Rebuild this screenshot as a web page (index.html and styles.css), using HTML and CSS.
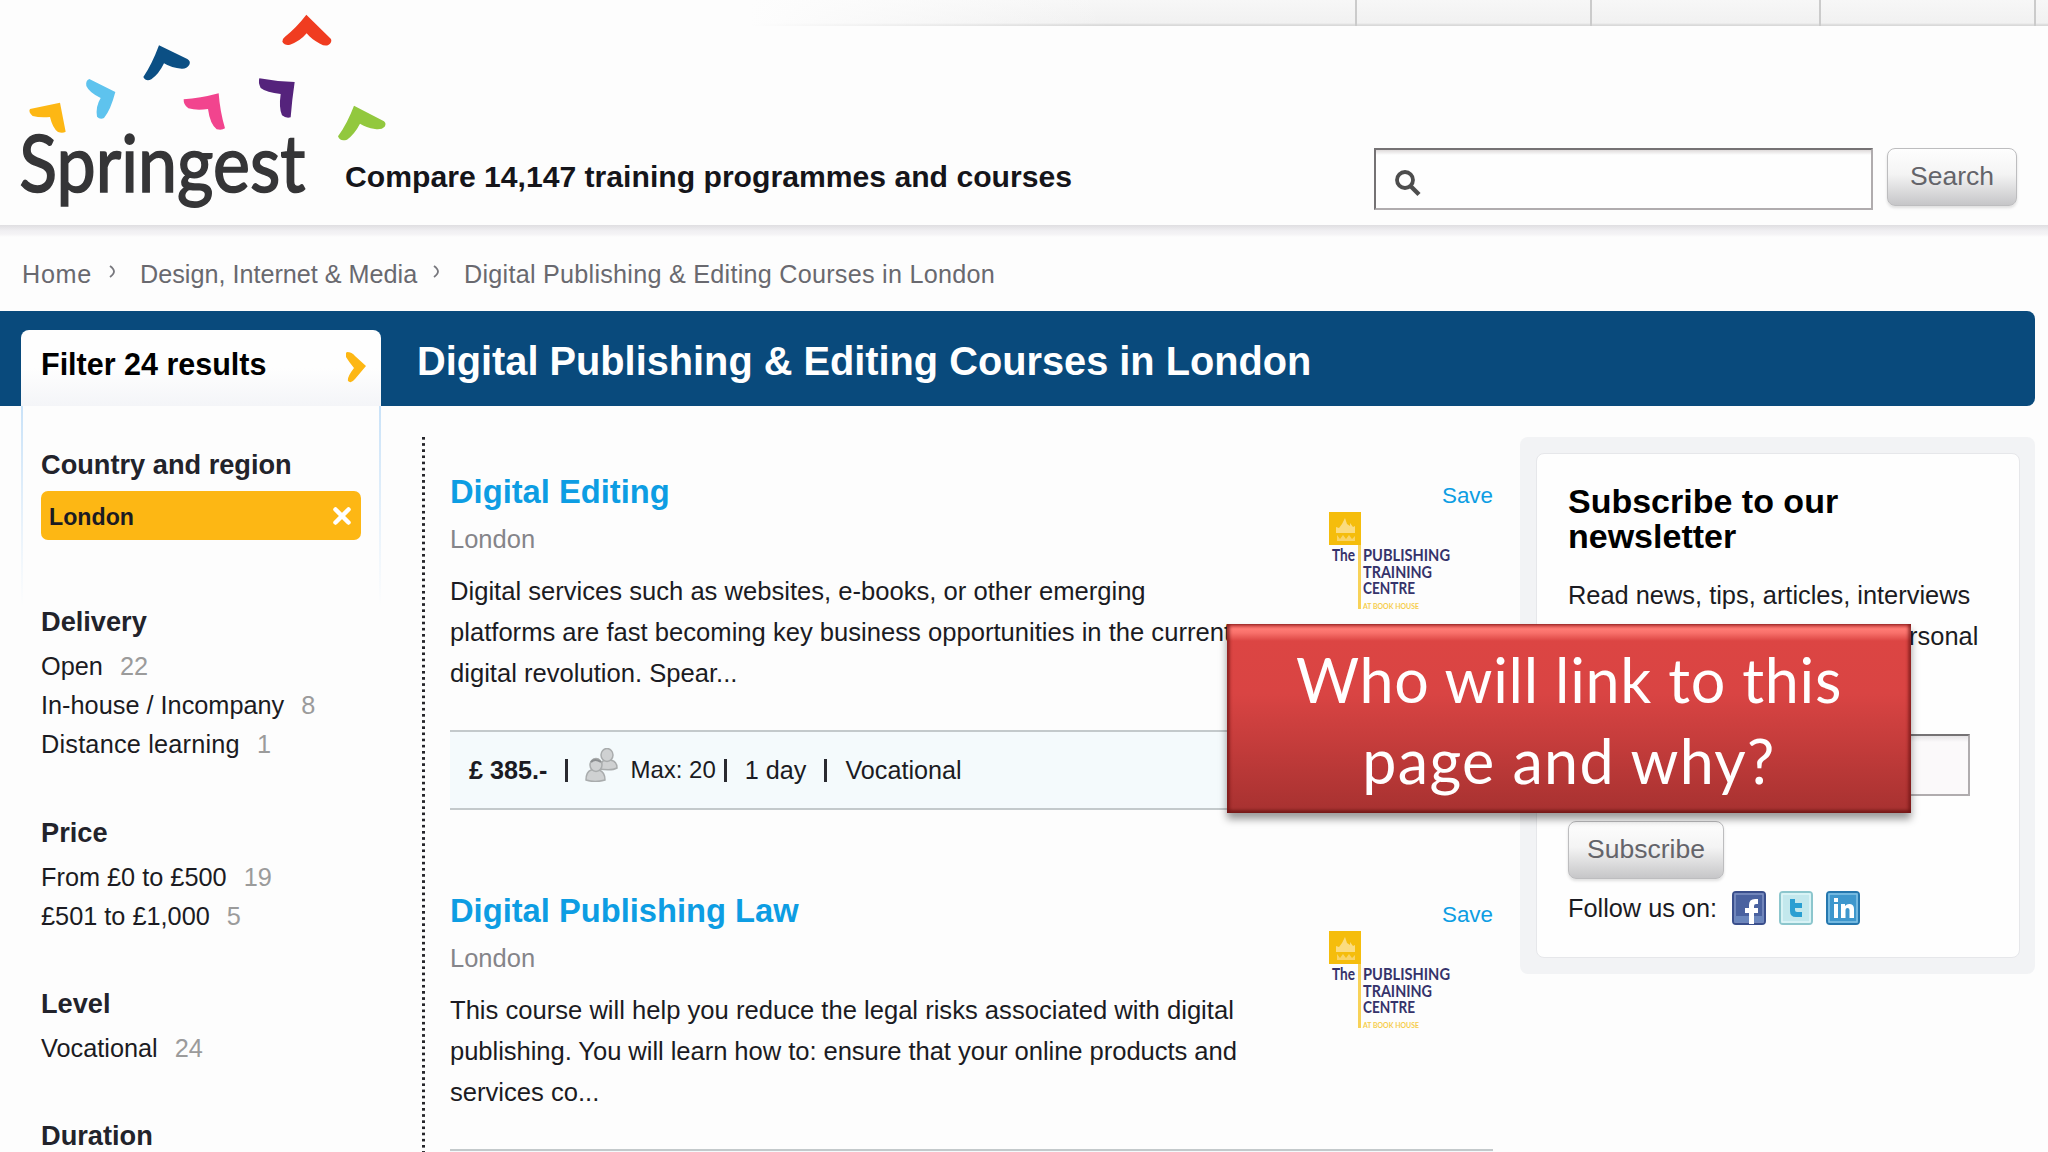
FILE: index.html
```
<!DOCTYPE html>
<html lang="en">
<head>
  <meta charset="UTF-8" />
  <meta name="viewport" content="width=device-width, initial-scale=1.0"/>
  <title>Digital Publishing &amp; Editing Courses in London - Springest</title>
  <link rel="stylesheet" href="styles.css">
</head>
<body>
  <div class="page">
    <header class="header">
      <svg class="logo" viewBox="0 0 1200 675">
        <path fill="#fdb714" d="M180 308L197 395Q188 401 174 396Q158 385 150 351Q120 354 98 348Q84 336 90 327Z"/>
        <path fill="#5ec3ee" d="M268 237L346 276Q332 330 312 354Q300 360 291 350Q286 320 302 294Q268 278 259 258Q256 242 268 237Z"/>
        <path fill="#0b4f84" d="M477 136L562 177Q573 184 568 194Q560 207 545 206Q515 204 492 190Q477 222 454 238Q438 246 430 231Q455 195 477 136Z"/>
        <path fill="#f2448e" d="M656 280Q660 335 675 385Q666 392 650 388Q630 372 624 327Q590 332 565 325Q550 315 551 298Q600 295 656 280Z"/>
        <path fill="#55237c" d="M778 235Q830 245 884 246Q876 300 872 352Q858 356 846 346Q836 325 842 282Q800 278 782 264Q774 248 778 235Z"/>
        <path fill="#f03c20" d="M919 44L993 117Q997 128 985 135Q975 140 960 131Q935 119 920 100Q900 124 870 134Q855 138 847 125Q846 117 855 110Q890 82 919 44Z"/>
        <path fill="#92c83e" d="M1062 317L1152 364Q1160 371 1154 380Q1145 390 1125 387Q1098 383 1080 371Q1064 402 1041 419Q1020 426 1014 409Q1042 370 1062 317Z"/>
        <text class="logo-text" x="58" y="575" textLength="858" lengthAdjust="spacingAndGlyphs">Springest</text>
      </svg>
      <div class="topnav">
        <span class="topnav-item first"></span>
        <span class="topnav-item account"></span>
        <span class="topnav-item list"></span>
        <span class="topnav-item lang"></span>
      </div>
      <div class="header-row">
        <p class="tagline">Compare 14,147 training programmes and courses</p>
        <div class="search">
          <div class="search-box">
            <svg width="28" height="28" viewBox="0 0 28 28" fill="none" stroke="#4d4d4d">
              <circle cx="11" cy="10" r="8" stroke-width="3.800"/>
              <path d="M17 16.500L25 24.500" stroke-width="4.500"/>
            </svg>
          </div>
          <button class="button">Search</button>
        </div>
      </div>
    </header>

    <nav class="breadcrumbs">
      <a class="home">Home</a>
      <svg class="sep" width="7" height="13" viewBox="0 0 7 13"><path d="M1 1Q5 4 5 6.500Q5 9 1 12" fill="none" stroke="#77777d" stroke-width="1.800"/></svg>
      <a class="subject">Design, Internet &amp; Media</a>
      <svg class="sep" width="7" height="13" viewBox="0 0 7 13"><path d="M1 1Q5 4 5 6.500Q5 9 1 12" fill="none" stroke="#77777d" stroke-width="1.800"/></svg>
      <a class="current">Digital Publishing &amp; Editing Courses in London</a>
    </nav>

    <div class="banner">
      <div class="filter-tab">
        <span>Filter 24 results</span>
        <svg width="21" height="32" viewBox="0 0 21 32"><path d="M1 1Q6 1 9 5L20 15L9 28Q5 33 2 30Q1 26 8 17Q3 11 0 6Q-1 2 1 1Z" fill="#fdb714"/></svg>
      </div>
      <h1>Digital Publishing &amp; Editing Courses in London</h1>
    </div>

    <div class="content">
      <aside class="filters">
        <section>
          <h3>Country and region</h3>
          <div class="pill">
            <span>London</span>
            <svg width="18" height="18" viewBox="0 0 18 18"><path d="M2.500 2.500L15.500 15.500M15.500 2.500L2.500 15.500" stroke="#fff" stroke-width="4.500" stroke-linecap="round"/></svg>
          </div>
        </section>
        <section class="delivery">
          <h3>Delivery</h3>
          <ul>
            <li>Open <span>22</span></li>
            <li>In-house / Incompany <span>8</span></li>
            <li class="wide">Distance learning <span>1</span></li>
          </ul>
        </section>
        <section>
          <h3>Price</h3>
          <ul>
            <li>From £0 to £500 <span>19</span></li>
            <li>£501 to £1,000 <span>5</span></li>
          </ul>
        </section>
        <section>
          <h3>Level</h3>
          <ul>
            <li>Vocational <span>24</span></li>
          </ul>
        </section>
        <section>
          <h3>Duration</h3>
        </section>
      </aside>

      <div class="divider"></div>

      <main class="courses">
        <article class="course">
          <div class="course-top">
            <div class="course-info">
              <h2>Digital Editing</h2>
              <p class="place">London</p>
              <p class="desc">Digital services such as websites, e-books, or other emerging<br>platforms are fast becoming key business opportunities in the current<br>digital revolution. Spear...</p>
            </div>
            <div class="course-side">
              <a class="save">Save</a>
              <svg class="provider" width="126" height="98" viewBox="0 0 126 98">
                <rect x="0" y="0" width="32" height="33" fill="#f5bd0c"/>
                <path d="M16 6l2 6 3 2v-3l3 4 2-1v7H7v-6l3 1 3-4z" fill="#fbdc80"/>
                <path d="M8 23l3 4 3-4 3 4 3-4 3 4 3-3v5H8z" fill="#f9d467"/>
                <rect x="29" y="33" width="3" height="64" fill="#f8d258"/>
                <text class="ptc-text" x="3" y="49" textLength="23" lengthAdjust="spacingAndGlyphs">The</text>
                <text class="ptc-text" x="34" y="49" textLength="87" lengthAdjust="spacingAndGlyphs">PUBLISHING</text>
                <text class="ptc-text" x="34" y="65.500" textLength="69" lengthAdjust="spacingAndGlyphs">TRAINING</text>
                <text class="ptc-text" x="34" y="82" textLength="52" lengthAdjust="spacingAndGlyphs">CENTRE</text>
                <text class="ptc-small" x="34" y="97" textLength="56" lengthAdjust="spacingAndGlyphs">AT BOOK HOUSE</text>
              </svg>
            </div>
          </div>
          <div class="meta">
            <b>£ 385.-</b><i></i>
            <svg class="people" width="33" height="34" viewBox="0 0 33 34">
              <g fill="#cfd1d2" stroke="#a9acad" stroke-width="1.500">
                <path d="M14 21Q16 13 20 12H25Q32 13 32 20Q27 23 14 21Z"/>
                <ellipse cx="22" cy="7" rx="6" ry="6.500"/>
                <path d="M1 32Q1 24 6 22H14Q20 24 20 32Q10 35 1 32Z"/>
                <ellipse cx="11" cy="17" rx="6" ry="6.500"/>
              </g>
              <path d="M6 14Q10 10 16 14" stroke="#8b8e90" stroke-width="2" fill="none"/>
            </svg>
            <span class="max">Max: 20</span><i class="tight"></i>
            <span class="days">1 day</span><i></i>
            <span class="type">Vocational</span>
          </div>
        </article>

        <article class="course">
          <div class="course-top">
            <div class="course-info">
              <h2>Digital Publishing Law</h2>
              <p class="place">London</p>
              <p class="desc">This course will help you reduce the legal risks associated with digital<br><span class="tight-line">publishing. You will learn how to: ensure that your online products and</span><br>services co...</p>
            </div>
            <div class="course-side">
              <a class="save">Save</a>
              <svg class="provider" width="126" height="98" viewBox="0 0 126 98">
                <rect x="0" y="0" width="32" height="33" fill="#f5bd0c"/>
                <path d="M16 6l2 6 3 2v-3l3 4 2-1v7H7v-6l3 1 3-4z" fill="#fbdc80"/>
                <path d="M8 23l3 4 3-4 3 4 3-4 3 4 3-3v5H8z" fill="#f9d467"/>
                <rect x="29" y="33" width="3" height="64" fill="#f8d258"/>
                <text class="ptc-text" x="3" y="49" textLength="23" lengthAdjust="spacingAndGlyphs">The</text>
                <text class="ptc-text" x="34" y="49" textLength="87" lengthAdjust="spacingAndGlyphs">PUBLISHING</text>
                <text class="ptc-text" x="34" y="65.500" textLength="69" lengthAdjust="spacingAndGlyphs">TRAINING</text>
                <text class="ptc-text" x="34" y="82" textLength="52" lengthAdjust="spacingAndGlyphs">CENTRE</text>
                <text class="ptc-small" x="34" y="97" textLength="56" lengthAdjust="spacingAndGlyphs">AT BOOK HOUSE</text>
              </svg>
            </div>
          </div>
          <div class="meta"></div>
        </article>
      </main>

      <aside class="newsletter">
        <div class="newsletter-inner">
          <h2>Subscribe to our<br>newsletter</h2>
          <p>Read news, tips, articles, interviews<br>and offers to help your own personal</p>
          <div class="email"></div>
          <button class="button subscribe">Subscribe</button>
          <div class="follow">
            <span>Follow us on:</span>
            <svg width="34" height="34" viewBox="0 0 34 34">
              <rect x="1" y="1" width="32" height="32" rx="3" fill="#4a62a0" stroke="#3a4f8c" stroke-width="2"/>
              <rect x="3" y="3" width="28" height="28" fill="none" stroke="#8093c4" stroke-width="1.500"/>
              <rect x="3" y="25" width="28" height="6" fill="#6a86bd"/>
              <path d="M17 33V22H13V17H17V14Q17 8 23 8H26V13H24Q22 13 22 15V17H26V22H22V33Z" fill="#fff"/>
            </svg>
            <svg width="34" height="34" viewBox="0 0 34 34">
              <rect x="1" y="1" width="32" height="32" rx="3" fill="#c3e8ed" stroke="#8cc6cd" stroke-width="2"/>
              <rect x="3" y="3" width="28" height="28" fill="none" stroke="#e0f6f8" stroke-width="1.500"/>
              <path d="M11 8H16V12H23V17H16V19Q16 21 18 21H23V26H17Q11 26 11 20Z" fill="#2a9fd2"/>
            </svg>
            <svg width="34" height="34" viewBox="0 0 34 34">
              <rect x="1" y="1" width="32" height="32" rx="3" fill="#3e97cd" stroke="#2577ae" stroke-width="2"/>
              <rect x="3" y="3" width="28" height="28" fill="none" stroke="#84c3e6" stroke-width="1.500"/>
              <path d="M8 7H12V11H8ZM8 13H12V27H8ZM15 13H19V15Q21 12.500 24 13Q28 13.500 28 18V27H23.500V19Q23.500 17 21.500 17Q19.500 17 19.500 19V27H15Z" fill="#fff"/>
            </svg>
          </div>
        </div>
      </aside>
    </div>

    <div class="callout">Who will link to this<br><span>page and why?</span></div>
  </div>
</body>
</html>
```
FILE: styles.css
```
* {
  box-sizing: border-box;
}
body {
  font-family: "Liberation Sans", Arial, sans-serif;
  background: #fdfdfd;
  color: #1b1b22;
  margin: 0;
}
h1, h2, h3, p, ul {
  margin: 0;
  padding: 0;
}
ul {
  list-style: none;
}
svg {
  display: block;
  flex: none;
}
.page {
  position: relative;
  width: 2048px;
  height: 1152px;
  overflow: hidden;
}

/* header */
.header {
  display: grid;
  grid-template-columns: 400px 1fr;
  grid-template-rows: 26px 199px;
  height: 237px;
  background: linear-gradient(#dfdee1, #f1f0f3 6px, #f4f3f5 9px, #fdfdfd) 0 225px / 100% 12px no-repeat;
}
.logo {
  grid-row: 1 / 3;
  width: 400px;
  height: 225px;
}
.logo-text {
  font-family: Lato, sans-serif;
  font-size: 236px;
  fill: #353537;
  stroke: #353537;
  stroke-width: 5px;
}
.topnav {
  display: flex;
  justify-content: flex-end;
  margin-left: 350px;
  background: linear-gradient(90deg, #fdfdfd, rgba(253, 253, 253, 0) 360px), linear-gradient(#f7f7f7, #f1f1f1 23px, #d9d9d9 25px);
}
.topnav-item {
  border-left: 2px solid #cbcbcb;
}
.topnav-item.first {
  width: 235px;
}
.topnav-item.account {
  width: 229px;
}
.topnav-item.list {
  width: 215px;
}
.topnav-item.lang {
  width: 14px;
}
.header-row {
  display: flex;
  justify-content: space-between;
  align-items: flex-start;
  margin-left: -55px;
  padding-right: 31px;
}
.tagline {
  margin-top: 131px;
  font-size: 30.15px;
  line-height: 40px;
  font-weight: bold;
  color: #15151a;
}
.search {
  display: flex;
  gap: 14px;
  margin-top: 122px;
}
.search-box {
  width: 499px;
  height: 62px;
  padding: 20px 0 0 18px;
  background: linear-gradient(#dedada, #fefefe 5px);
  border: 2px solid #b0acae;
  border-top-color: #757274;
  border-left-color: #757274;
}
.button {
  width: 130px;
  height: 58px;
  padding: 0 0 1px;
  font-family: inherit;
  font-size: 26.5px;
  color: #64646a;
  background: linear-gradient(#fefefe, #f4f4f4 45%, #c6c6c8);
  border: 1px solid #bdbdbf;
  border-radius: 8px;
  box-shadow: 0 2px 3px rgba(0, 0, 0, 0.12);
}

/* breadcrumbs */
.breadcrumbs {
  display: flex;
  height: 74px;
  padding: 17px 0 0 22px;
  font-size: 25.2px;
  line-height: 40px;
  color: #69696f;
  white-space: nowrap;
}
.breadcrumbs .home {
  width: 69px;
  letter-spacing: 0.7px;
}
.breadcrumbs .subject {
  width: 275px;
}
.breadcrumbs .current {
  letter-spacing: 0.25px;
}
.sep {
  margin: 11px 24px 0 18px;
}

/* title bar */
.banner {
  display: flex;
  align-items: flex-start;
  width: 2035px;
  height: 95px;
  padding: 19px 0 0 21px;
  background: #094a7c;
  border-radius: 0 8px 8px 0;
}
.filter-tab {
  display: flex;
  justify-content: space-between;
  width: 360px;
  height: 76px;
  padding: 0 14px 0 20px;
  background: linear-gradient(#fefefe 50%, #f4f5f8);
  border-radius: 8px 8px 0 0;
  font-size: 30.5px;
  line-height: 69px;
  font-weight: bold;
  color: #000;
}
.filter-tab svg {
  margin-top: 21px;
}
.banner h1 {
  margin: -19px 0 0 36px;
  font-size: 39.75px;
  line-height: 100px;
  color: #fff;
}

/* columns */
.content {
  display: flex;
  align-items: flex-start;
  padding-left: 21px;
}
.filters {
  width: 360px;
  padding: 43px 20px 0 20px;
  background:
    linear-gradient(#c9e2f8, rgba(201, 226, 248, 0)) 0 0 / 2px 200px no-repeat,
    linear-gradient(#c9e2f8, rgba(201, 226, 248, 0)) 100% 0 / 2px 200px no-repeat;
}
.filters section {
  margin-bottom: 52px;
}
.filters .delivery {
  margin-top: 66px;
}
.filters h3 {
  font-size: 27.2px;
  line-height: 32px;
  color: #22232b;
}
.pill {
  display: flex;
  justify-content: space-between;
  height: 49px;
  margin-top: 10px;
  padding: 2px 10px 0 8px;
  background: #fdb714;
  border-radius: 7px;
  font-size: 23.2px;
  line-height: 49px;
  font-weight: bold;
}
.pill svg {
  margin-top: 14px;
}
.filters ul {
  margin-top: 9px;
}
.filters li {
  height: 39.2px;
  font-size: 25.3px;
  line-height: 39.2px;
  white-space: nowrap;
}
.filters li.wide {
  letter-spacing: 0.2px;
}
.filters li span {
  margin-left: 10px;
  color: #9b9b9b;
}
.divider {
  width: 3px;
  height: 715px;
  margin: 31px 25px 0 41px;
  background: linear-gradient(#26262b 3px, transparent 3px) 0 0 / 3px 6.17px;
}

/* course list */
.courses {
  width: 1043px;
  padding-top: 66px;
}
.course {
  height: 419px;
}
.course-top {
  display: flex;
  justify-content: space-between;
  height: 258px;
}
.course h2 {
  font-size: 32.7px;
  line-height: 40px;
  color: #0d9de3;
}
.place {
  margin-top: 7px;
  font-size: 25.5px;
  line-height: 40px;
  color: #85858a;
}
.desc {
  margin-top: 12px;
  font-size: 25.6px;
  line-height: 41px;
  white-space: nowrap;
}
.desc .tight-line {
  letter-spacing: -0.06px;
}
.course-side {
  display: flex;
  flex-direction: column;
  width: 164px;
}
.course-side .save {
  height: 40px;
  font-size: 22.4px;
  line-height: 47px;
  text-align: right;
  color: #0d9de3;
}
.ptc-text {
  font-family: Lato, sans-serif;
  font-size: 17px;
  font-weight: bold;
  fill: #35336b;
}
.ptc-small {
  font-family: Lato, sans-serif;
  font-size: 8px;
  font-weight: bold;
  fill: #f6cd4c;
}
.meta {
  display: flex;
  align-items: center;
  height: 80px;
  padding-left: 19px;
  font-size: 25.2px;
  background: #f4fafc;
  border-top: 2px solid #c3c9cb;
  border-bottom: 2px solid #c3c9cb;
  white-space: nowrap;
}
.meta i {
  width: 3px;
  height: 23px;
  margin: 0 18px;
  background: #2a2a30;
}
.meta i.tight {
  margin-left: 8px;
}
.meta .people {
  margin: -10px 12px 0 -1px;
}
.meta .max {
  font-size: 24px;
}

/* newsletter */
.newsletter {
  width: 515px;
  height: 537px;
  margin: 31px 0 0 27px;
  padding: 16px 15px 16px 16px;
  background: #f2f3f5;
  border-radius: 8px;
}
.newsletter-inner {
  height: 505px;
  padding: 30px 0 0 31px;
  background: #fefefe;
  border: 1px solid #e6e7ea;
  border-radius: 8px;
}
.newsletter h2 {
  font-size: 34px;
  line-height: 35px;
  color: #000;
}
.newsletter p {
  height: 118px;
  margin-top: 21px;
  font-size: 25.4px;
  line-height: 41px;
  white-space: nowrap;
}
.email {
  width: 402px;
  height: 62px;
  margin-top: 41px;
  background: linear-gradient(#e6e4e6, #fbf9fa 6px);
  border: 2px solid #b0acae;
  border-top-color: #757274;
}
.subscribe {
  display: block;
  width: 156px;
  margin-top: 25px;
}
.follow {
  display: flex;
  gap: 13px;
  margin-top: 12px;
  font-size: 25.3px;
  line-height: 35px;
}
.follow span {
  width: 151px;
}

/* callout over the page */
.callout {
  position: absolute;
  left: 1227px;
  top: 624px;
  width: 684px;
  height: 189px;
  padding-top: 15px;
  text-align: center;
  font-family: Lato, sans-serif;
  font-size: 61px;
  line-height: 81px;
  letter-spacing: 0.7px;
  color: #fff;
  background: linear-gradient(#c8403e, #ff7b74 5px, #f8706a 9px, #dc4543 17px, #d94443 70px, #a93231 184px, #8a2a28);
  box-shadow: inset 3px 0 3px rgba(110, 20, 20, 0.6), inset -3px 0 3px rgba(110, 20, 20, 0.6), inset 0 -3px 3px rgba(110, 20, 20, 0.5), 0 6px 8px rgba(0, 0, 0, 0.4);
}
.callout span {
  letter-spacing: 1.3px;
}
```
